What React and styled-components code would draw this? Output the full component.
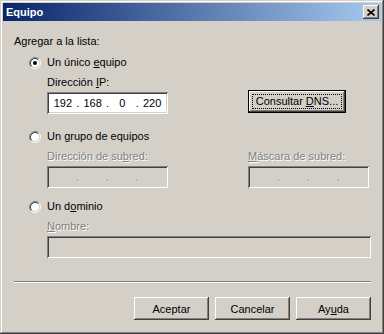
import React from "react";
import styled, { createGlobalStyle, css } from "styled-components";

const GlobalStyle = createGlobalStyle`
  html, body {
    margin: 0;
    padding: 0;
    background: #d4d0c8;
  }
  body {
    font-family: "Liberation Sans", Arial, sans-serif;
    font-size: 11px;
    color: #000;
  }
`;

const raised = css`
  box-shadow: inset -1px -1px #404040, inset 1px 1px #ffffff,
    inset -2px -2px #808080, inset 2px 2px #d4d0c8;
`;

const sunken = css`
  box-shadow: inset 1px 1px #808080, inset -1px -1px #ffffff,
    inset 2px 2px #404040, inset -2px -2px #d4d0c8;
`;

function Radio({ checked }) {
  return (
    <svg width="12" height="12" viewBox="0 0 12 12">
      <circle cx="6" cy="6" r="4.5" fill="#fff" />
      <path d="M2.11 9.89 A5.5 5.5 0 0 1 9.89 2.11" stroke="#808080" fill="none" />
      <path d="M9.89 2.11 A5.5 5.5 0 0 1 2.11 9.89" stroke="#ffffff" fill="none" />
      <path d="M2.82 9.18 A4.5 4.5 0 0 1 9.18 2.82" stroke="#404040" fill="none" />
      <path d="M9.18 2.82 A4.5 4.5 0 0 1 2.82 9.18" stroke="#d4d0c8" fill="none" />
      {checked && <circle cx="6" cy="6" r="2" fill="#000" />}
    </svg>
  );
}

function IpField({ values, disabled }) {
  return (
    <Field $disabled={disabled}>
      {values.map((v, i) => (
        <React.Fragment key={i}>
          <Octet>{v}</Octet>
          {i < values.length - 1 && <Dot $disabled={disabled}>.</Dot>}
        </React.Fragment>
      ))}
    </Field>
  );
}

export default function App() {
  return (
    <>
      <GlobalStyle />
      <Window>
        <TitleBar>
          <Title>Equipo</Title>
          <CloseButton>
            <svg width="8" height="7" viewBox="0 0 8 7">
              <path d="M0.5 0.5 L7.5 6.5 M7.5 0.5 L0.5 6.5" stroke="#000" strokeWidth="1.6" />
            </svg>
          </CloseButton>
        </TitleBar>
        <Body>
          <Heading>Agregar a la lista:</Heading>

          <RadioRow $top={8}>
            <Radio checked />
            <span>Un único <u>e</u>quipo</span>
          </RadioRow>
          <Indented>
            <Label>Dirección <u>I</u>P:</Label>
            <Label />
            <IpField values={["192", "168", "0", "220"]} />
            <DefaultButton>
              <Focus>
                <span>Consultar <u>D</u>NS...</span>
              </Focus>
            </DefaultButton>
          </Indented>

          <RadioRow $top={16}>
            <Radio />
            <span>Un <u>g</u>rupo de equipos</span>
          </RadioRow>
          <Indented>
            <Label $disabled>Dirección de su<u>b</u>red:</Label>
            <Label $disabled><u>M</u>áscara de subred:</Label>
            <IpField values={["", "", "", ""]} disabled />
            <IpField values={["", "", "", ""]} disabled />
          </Indented>

          <RadioRow $top={12}>
            <Radio />
            <span>Un d<u>o</u>minio</span>
          </RadioRow>
          <Indented $single>
            <Label $disabled><u>N</u>ombre:</Label>
            <Field $disabled />
          </Indented>

          <Separator />

          <ButtonRow>
            <Button>Aceptar</Button>
            <Button>Cancelar</Button>
            <Button>
              <span>Ay<u>u</u>da</span>
            </Button>
          </ButtonRow>
        </Body>
      </Window>
    </>
  );
}

const Window = styled.div`
  width: 384px;
  height: 334px;
  box-sizing: border-box;
  padding: 3px;
  background: #d4d0c8;
  display: flex;
  flex-direction: column;
  box-shadow: inset -1px -1px #404040, inset 1px 1px #d4d0c8,
    inset -2px -2px #808080, inset 2px 2px #ffffff;
`;

const TitleBar = styled.div`
  height: 18px;
  flex-shrink: 0;
  display: flex;
  align-items: center;
  justify-content: space-between;
  padding: 0 2px 0 3px;
  background: linear-gradient(to right, #0a246a, #a6caf0);
`;

const Title = styled.span`
  color: #fff;
  font-weight: bold;
  font-size: 11px;
`;

const CloseButton = styled.div`
  width: 16px;
  height: 14px;
  background: #d4d0c8;
  display: flex;
  align-items: center;
  justify-content: center;
  ${raised}
`;

const Body = styled.div`
  flex: 1;
  display: flex;
  flex-direction: column;
  padding: 0 10px 0 11px;
`;

const Heading = styled.div`
  margin-top: 14px;
  line-height: 13px;
`;

const RadioRow = styled.div`
  margin-top: ${(p) => p.$top}px;
  padding-left: 15px;
  height: 13px;
  line-height: 13px;
  display: flex;
  align-items: center;
  gap: 6px;
`;

const Indented = styled.div`
  margin-left: 33px;
  margin-top: 7px;
  display: grid;
  grid-template-columns: ${(p) => (p.$single ? "1fr" : "121px 121px")};
  column-gap: 80px;
  row-gap: 3px;
`;

const Label = styled.div`
  line-height: 13px;
  height: 13px;
  color: ${(p) => (p.$disabled ? "#808080" : "#000")};
  text-shadow: ${(p) => (p.$disabled ? "1px 1px 0 #fff" : "none")};
`;

const Field = styled.div`
  height: 22px;
  box-sizing: border-box;
  padding: 2px 3px;
  display: flex;
  align-items: center;
  background: ${(p) => (p.$disabled ? "#d4d0c8" : "#fff")};
  ${sunken}
`;

const Octet = styled.span`
  flex: 1;
  text-align: center;
  line-height: 13px;
`;

const Dot = styled.span`
  width: 4px;
  text-align: center;
  color: ${(p) => (p.$disabled ? "#808080" : "#000")};
  text-shadow: ${(p) => (p.$disabled ? "1px 1px 0 #fff" : "none")};
`;

const DefaultButton = styled.div`
  width: 98px;
  height: 23px;
  margin-top: -2px;
  box-sizing: border-box;
  border: 1px solid #000;
  padding: 3px;
  display: flex;
  background: #d4d0c8;
  ${raised}
`;

const Focus = styled.div`
  flex: 1;
  border: 1px dotted #000;
  display: flex;
  align-items: center;
  justify-content: center;
  line-height: 11px;
`;

const Separator = styled.div`
  margin-top: 23px;
  height: 0;
  border-top: 1px solid #808080;
  border-bottom: 1px solid #ffffff;
`;

const ButtonRow = styled.div`
  margin-top: 14px;
  display: flex;
  justify-content: flex-end;
  gap: 6px;
`;

const Button = styled.div`
  width: 75px;
  height: 23px;
  display: flex;
  align-items: center;
  justify-content: center;
  background: #d4d0c8;
  ${raised}
`;
